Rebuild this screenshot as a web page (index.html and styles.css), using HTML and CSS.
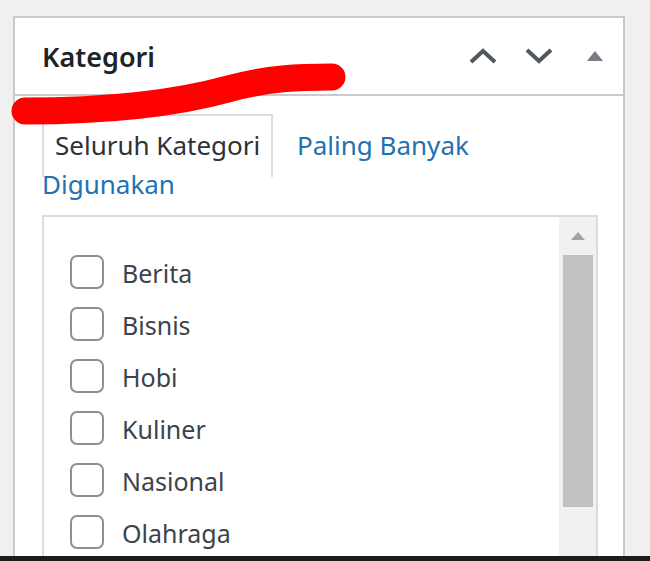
FILE: index.html
```html
<!DOCTYPE html>
<html lang="id">
<head>
    <meta charset="UTF-8">
    <meta name="viewport" content="width=device-width, initial-scale=1.0">
    <title>Kategori</title>
    <link rel="stylesheet" href="styles.css">
</head>
<body>

<div class="stage">
	<div class="postbox">
		<div class="postbox-header">
			<h2 class="postbox-title">Kategori</h2>
			<div class="handle-actions">
				<button class="handle-btn" aria-label="Naik">
					<svg width="30" height="16" viewBox="0 0 30 16">
						<path d="M3 14 L15 3 L27 14" fill="none" stroke="#50575e" stroke-width="4"/>
					</svg>
				</button>
				<button class="handle-btn" aria-label="Turun">
					<svg width="30" height="16" viewBox="0 0 30 16">
						<path d="M3 2 L15 13 L27 2" fill="none" stroke="#50575e" stroke-width="4"/>
					</svg>
				</button>
				<button class="handle-btn" aria-label="Tutup">
					<svg width="16" height="10" viewBox="0 0 16 10">
						<polygon points="0,10 8,0 16,10" fill="#787c82"/>
					</svg>
				</button>
			</div>
		</div>

		<div class="inside">
			<ul class="category-tabs">
				<li class="tab active">Seluruh Kategori</li>
				<li class="tab"><a href="#">Paling Banyak Digunakan</a></li>
			</ul>

			<div class="category-box">
				<ul class="category-list">
					<li><span class="check"></span>Berita</li>
					<li><span class="check"></span>Bisnis</li>
					<li><span class="check"></span>Hobi</li>
					<li><span class="check"></span>Kuliner</li>
					<li><span class="check"></span>Nasional</li>
					<li><span class="check"></span>Olahraga</li>
				</ul>
				<div class="scrollbar">
					<div class="scroll-arrow">
						<svg width="14" height="8" viewBox="0 0 14 8">
							<polygon points="0,8 7,0 14,8" fill="#a3a3a3"/>
						</svg>
					</div>
					<div class="scroll-thumb"></div>
				</div>
			</div>
		</div>
	</div>

	<!-- coretan merah di atas judul -->
	<svg class="scribble" width="360" height="130" viewBox="0 0 360 130">
		<path d="M25 111 C 100 111, 170 105, 228 89 C 268 78, 300 77, 332 77" fill="none" stroke="#ff0000" stroke-width="27" stroke-linecap="round"/>
	</svg>
</div>

<div class="taskbar"></div>

</body>
</html>
```

FILE: styles.css
```css
*{
	padding: 0;
	margin: 0;
	box-sizing: border-box;
}

body{
	font-family: "Noto Sans", "Open Sans", sans-serif;
	background-color: #f0f0f1;
	height: 561px;
	display: flex;
	flex-direction: column;
	overflow: hidden;
}

.stage{
	flex: 1;
	position: relative;
	overflow: hidden;
	padding: 16px 0 0 13px;
}

.postbox{
	width: 612px;
	height: 600px;
	background-color: white;
	border: 2px solid #c9cacd;
}

.postbox-header{
	height: 78px;
	border-bottom: 2px solid #c9cacd;
	display: flex;
	align-items: center;
	justify-content: space-between;
	padding-left: 27px;
}

.postbox-title{
	font-size: 27px;
	font-weight: 600;
	color: #1d2327;
}

.handle-actions{
	display: flex;
	align-items: center;
}

.handle-btn{
	width: 56px;
	height: 56px;
	background: none;
	border: none;
	display: flex;
	justify-content: center;
	align-items: center;
}

.inside{
	padding: 30px 25px 0 27px;
}

.category-tabs{
	list-style: none;
	font-size: 26px;
	line-height: 39px;
	width: 550px;
}

.tab{
	display: inline;
	padding: 11px 11px 14px;
	margin-right: 6px;
	color: #2c3338;
}

.tab.active{
	border: 2px solid #dcdcde;
	border-bottom: none;
}

.tab a{
	color: #2271b1;
	text-decoration: none;
}

.category-box{
	margin-top: 11px;
	height: 400px;
	border: 2px solid #dcdcde;
	display: flex;
}

.category-list{
	flex: 1;
	list-style: none;
	padding: 38px 0 0 26px;
}

.category-list li{
	height: 52px;
	display: flex;
	align-items: flex-start;
	gap: 18px;
	font-size: 25px;
	line-height: 36px;
	color: #3c434a;
}

.check{
	width: 34px;
	height: 34px;
	border: 2px solid #8c8f94;
	border-radius: 7px;
	flex-shrink: 0;
}

.scrollbar{
	width: 37px;
	background-color: #f1f1f1;
	display: flex;
	flex-direction: column;
	align-items: center;
}

.scroll-arrow{
	height: 38px;
	display: flex;
	align-items: center;
	justify-content: center;
}

.scroll-thumb{
	width: 30px;
	height: 252px;
	background-color: #c1c1c1;
}

.scribble{
	position: absolute;
	left: 0;
	top: 0;
}

.taskbar{
	height: 5px;
	background-color: #1c1c1c;
}
```
